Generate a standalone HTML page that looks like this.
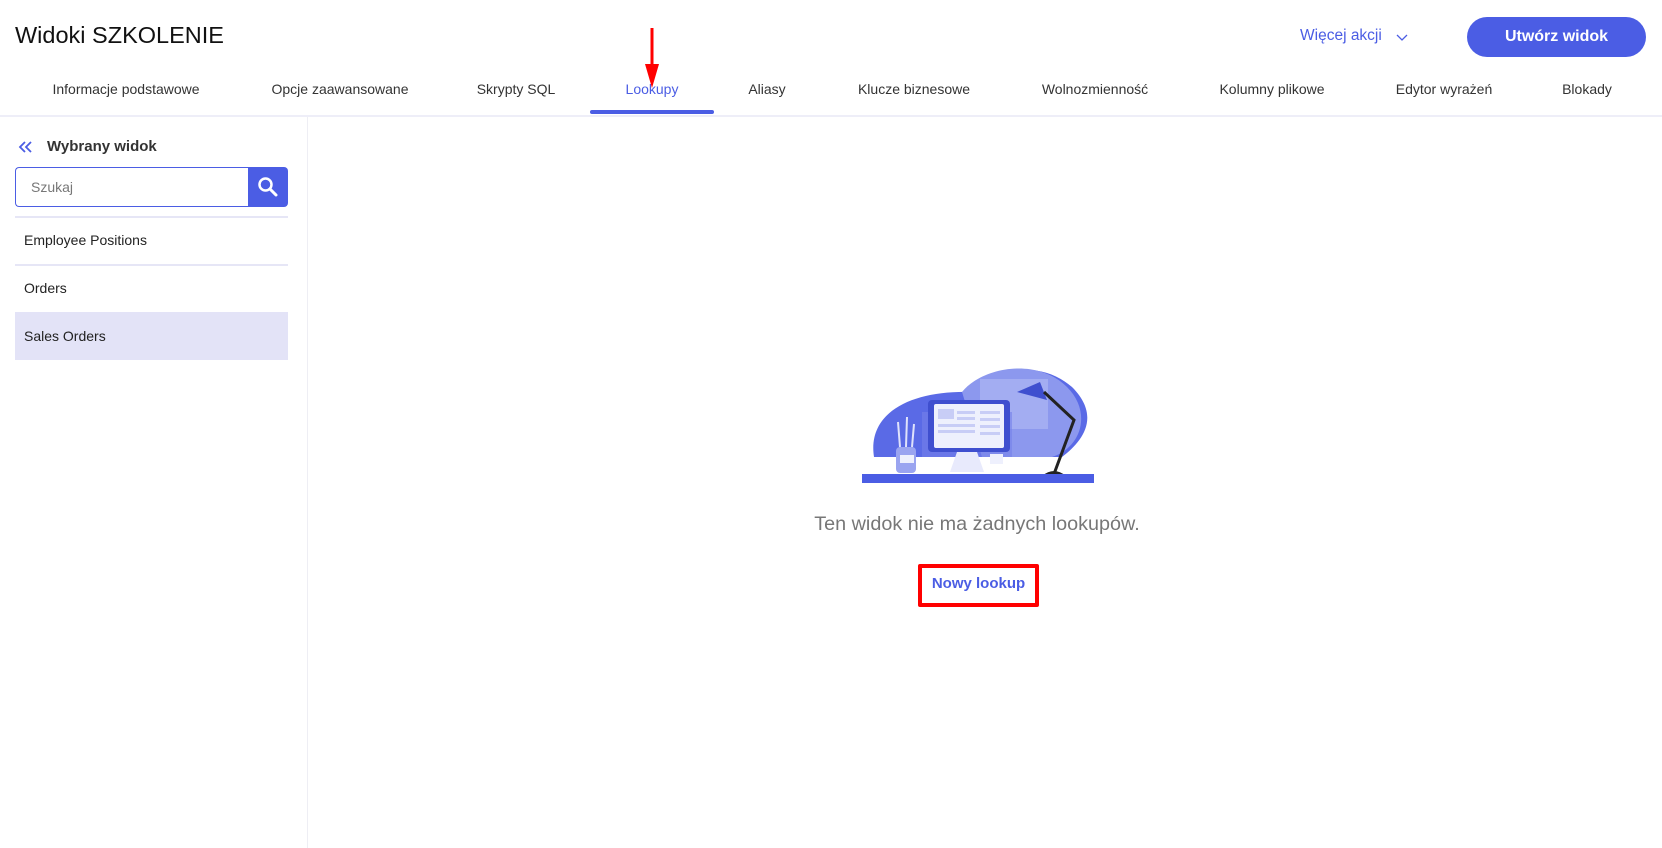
<!DOCTYPE html>
<html><head><meta charset="utf-8"><style>
*{margin:0;padding:0;box-sizing:border-box}
body{width:1662px;height:848px;background:#fff;font-family:"Liberation Sans",sans-serif;position:relative;overflow:hidden;color:#222}
.a{position:absolute;white-space:nowrap}
.tab{position:absolute;top:81px;font-size:14px;color:#333;transform:translateX(-50%)}
.item{position:absolute;left:24px;font-size:14px;color:#222}
</style></head><body>
<div class="a" style="left:15px;top:22px;font-size:23.5px;color:#111">Widoki SZKOLENIE</div>
<div class="a" style="left:1300px;top:27px;font-size:15.5px;color:#4b5de4">Więcej akcji</div>
<svg class="a" style="left:1395px;top:32px" width="14" height="10"><path d="M2 3l5 5 5-5" stroke="#4b5de4" fill="none" stroke-width="1.3"/></svg>
<div class="a" style="left:1467px;top:17px;width:179px;height:40px;border-radius:20px;background:#4b5de4;color:#fff;font-weight:bold;font-size:16px;text-align:center;line-height:40px">Utwórz widok</div>

<div class="tab" style="left:126px">Informacje podstawowe</div>
<div class="tab" style="left:340px">Opcje zaawansowane</div>
<div class="tab" style="left:516px">Skrypty SQL</div>
<div class="tab" style="left:652px;color:#4b5de4">Lookupy</div>
<div class="tab" style="left:767px">Aliasy</div>
<div class="tab" style="left:914px">Klucze biznesowe</div>
<div class="tab" style="left:1095px">Wolnozmienność</div>
<div class="tab" style="left:1272px">Kolumny plikowe</div>
<div class="tab" style="left:1444px">Edytor wyrażeń</div>
<div class="tab" style="left:1587px">Blokady</div>
<div class="a" style="left:0;top:115px;width:1662px;height:2px;background:#eeeef8"></div>
<div class="a" style="left:590px;top:110px;width:124px;height:4px;border-radius:2px;background:#4b5de4"></div>
<svg class="a" style="left:643px;top:28px" width="18" height="64"><rect x="7.5" y="0" width="3" height="40" fill="#f00"/><path d="M2 36h14l-7 24z" fill="#f00"/></svg>

<div class="a" style="left:307px;top:117px;width:1px;height:731px;background:#eeeef4"></div>
<svg class="a" style="left:17px;top:140px" width="18" height="14"><path d="M8 2l-5 5 5 5M14 2l-5 5 5 5" stroke="#4b5de4" stroke-width="1.8" fill="none"/></svg>
<div class="a" style="left:47px;top:138px;font-size:15px;font-weight:bold;color:#333">Wybrany widok</div>
<div class="a" style="left:15px;top:167px;width:234px;height:40px;border:1.5px solid #4b5de4;border-right:none;border-radius:4px 0 0 4px"></div>
<div class="a" style="left:31px;top:179px;font-size:14px;color:#777">Szukaj</div>
<div class="a" style="left:248px;top:167px;width:40px;height:40px;background:#4b5de4;border-radius:0 4px 4px 0"></div>
<svg class="a" style="left:257px;top:176px" width="22" height="22"><circle cx="8.5" cy="8.5" r="6" stroke="#fff" stroke-width="2.5" fill="none"/><path d="M13 13l6 6" stroke="#fff" stroke-width="3" stroke-linecap="round"/></svg>
<div class="a" style="left:15px;top:216px;width:273px;height:2px;background:#e6e6f6"></div>
<div class="item" style="top:232px">Employee Positions</div>
<div class="a" style="left:15px;top:264px;width:273px;height:2px;background:#e6e6f6"></div>
<div class="item" style="top:280px">Orders</div>
<div class="a" style="left:15px;top:312px;width:273px;height:48px;background:#e3e3f7"></div>
<div class="item" style="top:328px">Sales Orders</div>

<svg class="a" style="left:862px;top:362px" width="240" height="125" viewBox="0 0 240 125">
<path d="M12 95 C5 50 50 28 110 30 C130 10 175 -5 210 25 C240 55 220 80 200 95 Z" fill="#5a6ae6"/>
<path d="M100 30 C120 5 175 -5 205 25 C230 50 220 85 190 95 L120 95 Z" fill="#8c98ee"/>
<rect x="118" y="17" width="68" height="50" fill="#a3adf2"/>
<rect x="60" y="50" width="90" height="45" fill="#7480ea" opacity=".6"/>
<rect x="66" y="38" width="82" height="52" rx="4" fill="#3f4fcf"/>
<rect x="72" y="42" width="70" height="44" rx="2" fill="#eef0fd"/>
<rect x="76" y="47" width="16" height="10" fill="#c8cdf6"/>
<rect x="95" y="49" width="18" height="3" fill="#c8cdf6"/><rect x="95" y="55" width="18" height="3" fill="#c8cdf6"/>
<rect x="76" y="62" width="37" height="3" fill="#c8cdf6"/><rect x="76" y="68" width="37" height="3" fill="#c8cdf6"/>
<rect x="118" y="49" width="20" height="3" fill="#c8cdf6"/><rect x="118" y="56" width="20" height="3" fill="#c8cdf6"/><rect x="118" y="63" width="20" height="3" fill="#c8cdf6"/><rect x="118" y="70" width="20" height="3" fill="#c8cdf6"/>
<path d="M95 90 L88 110 L122 110 L115 90Z" fill="#e8eafc"/>
<rect x="128" y="92" width="13" height="10" fill="#eef0fd"/>
<rect x="34" y="85" width="20" height="26" rx="4" fill="#9aa4f0"/>
<path d="M38 85 L36 60 M44 85 L45 55 M50 85 L52 62" stroke="#dfe2fb" stroke-width="2"/>
<rect x="38" y="93" width="14" height="8" fill="#eef0fd"/>
<path d="M155 30 L178 20 L185 38 Z" fill="#3f4fcf"/>
<path d="M182 30 L212 58 L192 112" stroke="#222" stroke-width="3" fill="none"/>
<path d="M180 114 Q192 104 204 114Z" fill="#222"/>
<rect x="0" y="112" width="232" height="9" fill="#4b5de4"/>
</svg>
<div class="a" style="left:0;width:1954px;text-align:center;top:513px;font-size:19.8px;color:#777">Ten widok nie ma żadnych lookupów.</div>
<div class="a" style="left:918px;top:564px;width:121px;height:43px;border:4px solid #f00;border-radius:2px"></div>
<div class="a" style="left:918px;width:121px;text-align:center;top:575px;font-size:15px;font-weight:bold;color:#4b5de4">Nowy lookup</div>
</body></html>
